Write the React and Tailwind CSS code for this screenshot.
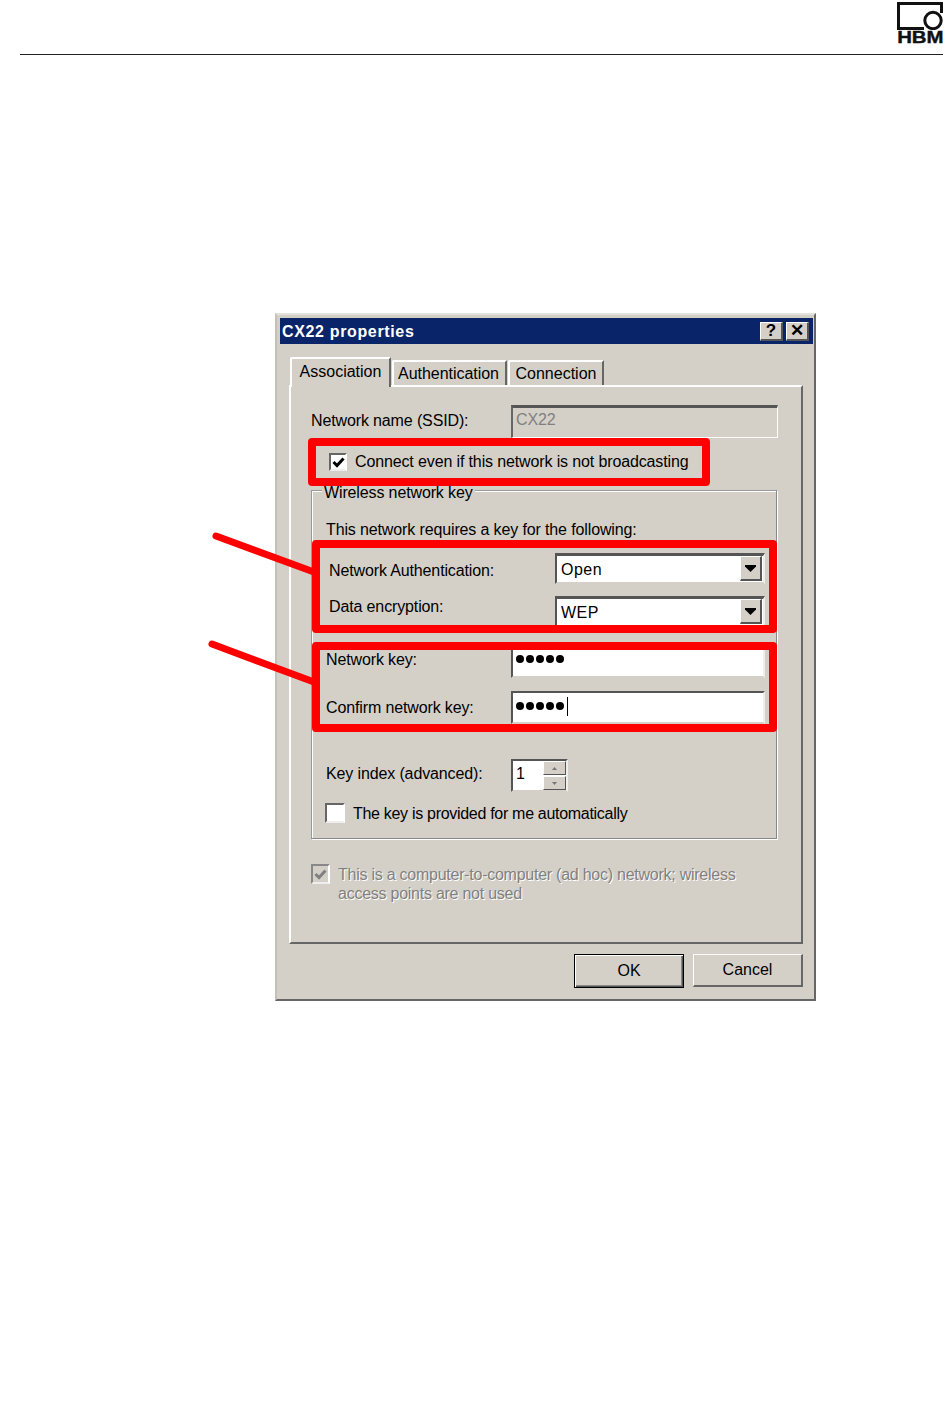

const F = "font-['Liberation_Sans',Arial,sans-serif]";
const sunken = "border-t-2 border-l-2 border-t-[#555] border-l-[#555] border-b-2 border-r-2 border-b-[#d4d0c8] border-r-[#eee]";

function Label({ className = "", children }) {
  return <span className={"text-[16px] leading-[18px] tracking-[-0.13px] text-black whitespace-nowrap " + className}>{children}</span>;
}

function Logo() {
  return (
    <div className="w-[46px] h-[43px] flex flex-col items-center">
      <svg width="46" height="28" viewBox="0 0 46 28" className="shrink-0">
        <path d="M1.5 28V1.5H44.5V11" fill="none" stroke="#111" strokeWidth="3" />
        <path d="M1.5 26.5H27" fill="none" stroke="#111" strokeWidth="3" />
        <circle cx="36" cy="18.5" r="8.2" fill="#fff" stroke="#111" strokeWidth="3" />
      </svg>
      <span className="mt-[1px] text-[17px] leading-[14px] font-bold text-[#111] scale-x-[1.2] [-webkit-text-stroke:0.4px_#111]">HBM</span>
    </div>
  );
}

function TitleButton({ children }) {
  return (
    <div className="w-[23px] h-[19px] bg-[#d4d0c8] border-t border-l border-t-white border-l-white border-b-2 border-r-2 border-b-[#555] border-r-[#555] flex items-center justify-center text-[17px] leading-none font-bold text-black">
      {children}
    </div>
  );
}

function Tab({ className = "", children }) {
  return (
    <div className={"bg-[#d4d0c8] border-t-2 border-l-2 border-t-white border-l-white border-r-2 border-r-[#666] rounded-tl-[2px] text-[16px] text-black flex items-center justify-center whitespace-nowrap " + className}>
      {children}
    </div>
  );
}

function Check({ className = "", checked, disabled }) {
  return (
    <div className={"border-t-2 border-l-2 border-t-[#666] border-l-[#666] border-b-2 border-r-2 border-b-[#eee] border-r-white flex items-center justify-center shrink-0 " + (disabled ? "bg-[#d4d0c8] " : "bg-white ") + className}>
      {checked && (
        <svg width="13" height="11" viewBox="0 0 13 11">
          <path d="M1.5 5L5 8.5L11.5 1.5" fill="none" stroke={disabled ? "#808080" : "#000"} strokeWidth="3" />
        </svg>
      )}
    </div>
  );
}

function Select({ value, className = "" }) {
  return (
    <div className={"w-[210px] bg-white border-t-[3px] border-l-[2px] border-t-[#555] border-l-[#555] border-b-2 border-r-2 border-b-[#d4d0c8] border-r-[#eee] flex items-center " + className}>
      <span className="text-[16px] leading-[18px] tracking-[0.5px] pl-[4px] pt-[1px] flex-1 text-black">{value}</span>
      <div className="w-[22px] self-stretch mb-[1px] mr-[1px] bg-[#d4d0c8] border-t border-l border-t-white border-l-white border-b-2 border-r-2 border-b-[#555] border-r-[#555] flex items-center justify-center">
        <svg width="11" height="7" viewBox="0 0 11 7"><path d="M0 0H11V1.5L5.5 7L0 1.5Z" fill="#000" /></svg>
      </div>
    </div>
  );
}

function Dots({ className = "" }) {
  return (
    <div className={"flex gap-[2px] pl-[3px] " + className}>
      {[0, 1, 2, 3, 4].map((i) => <span key={i} className="w-[8px] h-[8px] rounded-full bg-black" />)}
    </div>
  );
}

function Highlight({ className = "" }) {
  return <div className={"absolute border-[8px] border-[#ff0000] rounded-[4px] pointer-events-none " + className} />;
}

export default function App() {
  return (
    <div className={"relative w-[950px] h-[1413px] bg-white " + F}>
      <header className="ml-[20px] w-[923px] h-[55px] border-b border-b-[#222] flex justify-end items-start pt-[2px]">
        <Logo />
      </header>

      <div className="mt-[258px] ml-[275px] w-[541px] h-[688px] bg-[#d4d0c8] border-t-2 border-l-2 border-t-[#e4e2dc] border-l-[#c4c1ba] border-b-2 border-r-2 border-b-[#666] border-r-[#666] pt-[3px] px-[3px] flex flex-col">
        <div className="h-[26px] w-[533px] bg-[#0a246a] flex items-center justify-between pl-[2px] pr-[4px]">
          <span className="mt-[2px] text-white font-bold text-[16px] tracking-[0.65px] leading-none">CX22 properties</span>
          <div className="flex gap-[3px]">
            <TitleButton>?</TitleButton>
            <TitleButton>✕</TitleButton>
          </div>
        </div>

        <div className="flex items-end ml-[10px] h-[41px] relative z-10">
          <Tab className="w-[101px] h-[30px] -mb-[2px] pb-[3px]">Association</Tab>
          <Tab className="w-[115px] h-[25px] ml-[1px] pr-[2px] tracking-[-0.03px]">Authentication</Tab>
          <Tab className="w-[96px] h-[25px] ml-[1px]">Connection</Tab>
        </div>

        <div className="ml-[9px] w-[514px] h-[559px] border-t-2 border-l-2 border-t-white border-l-white border-b-2 border-r-2 border-b-[#666] border-r-[#666] pl-[20px] pt-[18px]">
          <div className="flex items-center h-[33px]">
            <Label className="w-[200px] -mt-[2px]">Network name (SSID):</Label>
            <div className="w-[267px] h-[33px] border-t-[3px] border-l-[2px] border-t-[#555] border-l-[#666] border-b border-r border-b-white border-r-white pl-[3px] text-[16px] leading-[24px] tracking-[-0.13px] text-[#808080]">CX22</div>
          </div>

          <div className="flex items-center h-[18px] mt-[15px] ml-[18px]">
            <Check checked className="w-[18px] h-[18px]" />
            <Label className="ml-[8px]">Connect even if this network is not broadcasting</Label>
          </div>

          <fieldset className="relative mt-[19px] w-[466px] h-[349px] border border-t-[#999] border-l-[#999] border-b-[#888] border-r-[#888] [box-shadow:inset_1px_1px_0_#fff,1px_1px_0_#fff]">
            <div className="-mt-[7px] ml-[10px] w-fit bg-[#d4d0c8] px-[2px] text-[16px] leading-[18px] tracking-[-0.13px] text-black whitespace-nowrap">Wireless network key</div>

            <div className="flex flex-col pl-[14px]">
              <Label className="mt-[19px] tracking-[-0.2px]">This network requires a key for the following:</Label>
              <div className="flex items-center h-[31px] mt-[14px] pl-[3px]">
                <Label className="w-[226px] mt-[5px]">Network Authentication:</Label>
                <Select value="Open" className="h-[31px]" />
              </div>
              <div className="flex items-center h-[31px] mt-[12px] pl-[3px]">
                <Label className="w-[226px] -mt-[9px]">Data encryption:</Label>
                <Select value="WEP" className="h-[31px]" />
              </div>

              <div className="flex items-center h-[30px] mt-[21px]">
                <Label className="w-[185px] -mt-[6px]">Network key:</Label>
                <div className={"w-[254px] h-[30px] bg-white flex items-center " + sunken}><Dots className="-mt-[8px]" /></div>
              </div>
              <div className="flex items-center h-[33px] mt-[13px]">
                <Label className="w-[185px]">Confirm network key:</Label>
                <div className={"w-[254px] h-[33px] bg-white flex items-center " + sunken}>
                  <Dots className="-mt-[3px]" />
                  <span className="w-px h-[19px] bg-black ml-[3px] -mt-[3px]" />
                </div>
              </div>

              <div className="flex items-center h-[33px] mt-[35px]">
                <Label className="w-[185px] -mt-[3px]">Key index (advanced):</Label>
                <div className={"w-[57px] h-[33px] bg-white flex items-center justify-between " + sunken}>
                  <span className="pl-[3px] -mt-[3px] text-[16px] leading-none text-black">1</span>
                  <div className="w-[23px] flex flex-col gap-[1px]">
                    <div className="h-[14px] bg-[#d4d0c8] border-t border-l border-t-white border-l-white border-b border-r border-b-[#555] border-r-[#555] flex items-center justify-center">
                      <svg width="5" height="3" viewBox="0 0 5 3"><path d="M2.5 0L5 3H0Z" fill="#777" /></svg>
                    </div>
                    <div className="h-[14px] bg-[#d4d0c8] border-t border-l border-t-white border-l-white border-b border-r border-b-[#555] border-r-[#555] flex items-center justify-center">
                      <svg width="5" height="3" viewBox="0 0 5 3"><path d="M0 0H5L2.5 3Z" fill="#777" /></svg>
                    </div>
                  </div>
                </div>
              </div>

              <div className="flex items-center h-[20px] mt-[11px] -ml-[1px]">
                <Check className="w-[20px] h-[20px]" />
                <Label className="ml-[8px] mt-[2px] !tracking-[-0.3px]">The key is provided for me automatically</Label>
              </div>
            </div>
          </fieldset>

          <div className="flex items-start mt-[25px]">
            <Check checked disabled className="w-[19px] h-[20px] !border-t-[#888] !border-l-[#888]" />
            <div className="ml-[8px] mt-[1px] text-[16px] leading-[19px] tracking-[-0.25px] text-[#808080] [text-shadow:1px_1px_0_#fff]">
              This is a computer-to-computer (ad hoc) network; wireless<br />access points are not used
            </div>
          </div>
        </div>

        <div className="flex justify-end gap-[9px] mt-[10px] w-[523px]">
          <div className="w-[110px] h-[34px] bg-[#d4d0c8] border border-black [box-shadow:inset_1px_1px_0_#fff,inset_-1px_-1px_0_#555,inset_-2px_-2px_0_#888] flex items-center justify-center text-[16px] text-black">OK</div>
          <div className="w-[110px] h-[33px] bg-[#d4d0c8] border-t border-l border-t-white border-l-white border-b-2 border-r-2 border-b-[#666] border-r-[#666] flex items-center justify-center text-[16px] text-black">Cancel</div>
        </div>
      </div>

      <Highlight className="left-[308px] top-[438px] w-[402px] h-[48px]" />
      <Highlight className="left-[312px] top-[540px] w-[465px] h-[93px]" />
      <Highlight className="left-[312px] top-[642px] w-[465px] h-[90px]" />
      <svg className="absolute left-[200px] top-[520px] pointer-events-none" width="120" height="170" viewBox="0 0 120 170">
        <path d="M16 16L114 52" stroke="#ff0000" strokeWidth="7" strokeLinecap="round" fill="none" />
        <path d="M12 124L114 162" stroke="#ff0000" strokeWidth="7" strokeLinecap="round" fill="none" />
      </svg>
    </div>
  );
}
